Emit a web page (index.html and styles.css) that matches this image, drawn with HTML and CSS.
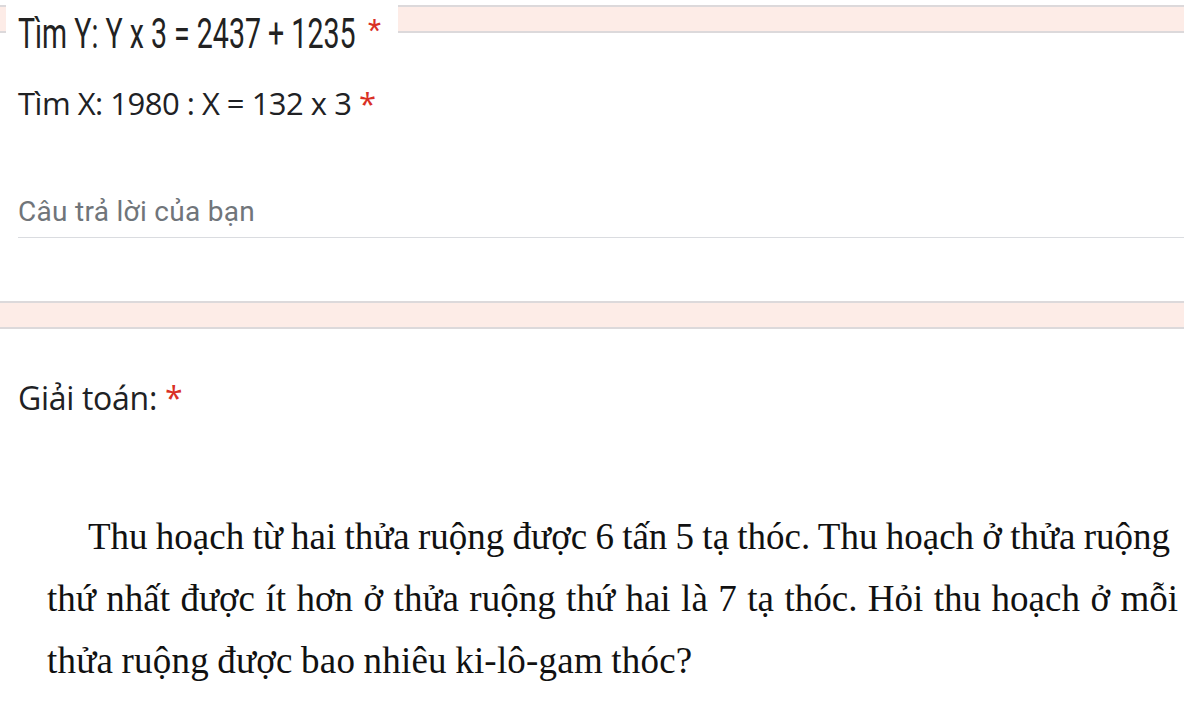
FILE: index.html
```html
<!DOCTYPE html>
<html lang="vi">
<head>
  <meta charset="UTF-8" />
  <meta name="viewport" content="width=device-width, initial-scale=1.0" />
  <title>Bài kiểm tra</title>
  <link rel="stylesheet" href="styles.css">
</head>
<body>
  <div class="title-row">
    <div class="band band-stub"></div>
    <div class="title-img">
      <span class="cond">Tìm Y: Y x 3 = 2437 + 1235</span>
      <span class="req req-big">*</span>
    </div>
    <div class="band band-fill"></div>
  </div>

  <div class="question">
    <div class="q-title q-x">Tìm X: 1980 : X = 132 x 3 <span class="req">*</span></div>
    <div class="answer">Câu trả lời của bạn</div>
  </div>

  <div class="band band-full"></div>

  <div class="question">
    <div class="q-title q-giai">Giải toán: <span class="req">*</span></div>
  </div>

  <div class="problem">
    <div class="line line-first">Thu hoạch từ hai thửa ruộng được 6 tấn 5 tạ thóc. Thu hoạch ở thửa ruộng</div>
    <div class="line">thứ nhất được ít hơn ở thửa ruộng thứ hai là 7 tạ thóc. Hỏi thu hoạch ở mỗi</div>
    <div class="line line-last">thửa ruộng được bao nhiêu ki-lô-gam thóc?</div>
  </div>
</body>
</html>
```

FILE: styles.css
```css
body {
  margin: 0;
  background: #ffffff;
  color: #202124;
  font-family: 'Open Sans', sans-serif;
  overflow: hidden;
}
.band {
  background: #fdece7;
  border-top: 2px solid #dcd9db;
  border-bottom: 2px solid #dcd9db;
  height: 24px;
}
.title-row {
  display: flex;
  align-items: flex-start;
}
.band-stub {
  width: 6px;
  margin-top: 5px;
}
.band-fill {
  flex: 1;
  margin-top: 5px;
}
.title-img {
  width: 392px;
  height: 60px;
  background: #ffffff;
  padding: 13px 0 0 12px;
  box-sizing: border-box;
  display: flex;
  align-items: flex-start;
  white-space: nowrap;
}
.cond {
  display: inline-block;
  width: 340px;
  font-family: Roboto, sans-serif;
  font-size: 42px;
  line-height: 42px;
  color: #222222;
  transform: scaleX(0.68);
  transform-origin: left top;
}
.req {
  color: #d93025;
}
.req-big {
  font-family: Roboto, sans-serif;
  font-size: 30px;
  line-height: 30px;
  margin-left: 10px;
  margin-top: 2px;
}
.question {
  padding-left: 18px;
}
.q-title {
  font-size: 31px;
  line-height: 40px;
  letter-spacing: -0.5px;
  color: #202124;
}
.q-x {
  margin-top: 23px;
}
.answer {
  margin-top: 73px;
  font-family: Roboto, sans-serif;
  font-size: 28px;
  line-height: 32px;
  letter-spacing: 0.3px;
  color: #70757a;
  padding-bottom: 9px;
  border-bottom: 1px solid #dadce0;
}
.band-full {
  margin-top: 63px;
}
.q-giai {
  margin-top: 49px;
  font-size: 32px;
  letter-spacing: -0.3px;
}
.problem {
  margin-top: 88px;
  padding: 0 6px 0 47px;
  font-family: 'Liberation Serif', serif;
  font-size: 37px;
  line-height: 62px;
  word-spacing: -1px;
  color: #111111;
}
.line {
  text-align: justify;
  text-align-last: justify;
  white-space: nowrap;
}
.line-first {
  text-indent: 41px;
  margin-right: 8px;
}
.line-last {
  text-align-last: left;
  letter-spacing: 0.2px;
}
```
